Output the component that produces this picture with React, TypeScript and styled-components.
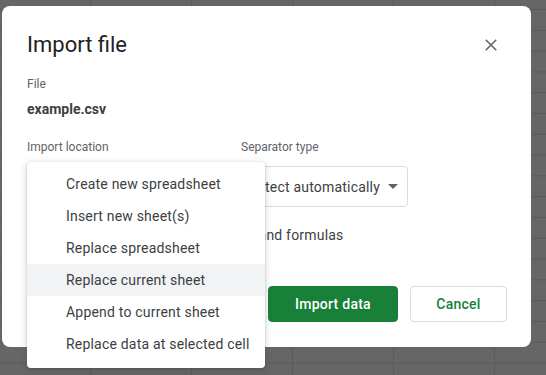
import React, { useState } from "react"
import styled, { createGlobalStyle } from "styled-components"

const GlobalStyle = createGlobalStyle`
  html, body {
    margin: 0;
    padding: 0;
  }
  body {
    width: 546px;
    height: 375px;
    overflow: hidden;
    font-family: Roboto, "Liberation Sans", Arial, sans-serif;
    background-color: #666666;
    background-image:
      linear-gradient(to right, #5a5a5a 1px, transparent 1px),
      linear-gradient(to bottom, #5a5a5a 1px, transparent 1px);
    background-size: 101px 20.8px;
    background-position: 90px 9px;
  }
`

const menuItems = [
  "Create new spreadsheet",
  "Insert new sheet(s)",
  "Replace spreadsheet",
  "Replace current sheet",
  "Append to current sheet",
  "Replace data at selected cell",
]

const App = function () {
  let [hovered, setHovered] = useState(3)

  return (
    <>
      <GlobalStyle />
      <Dialog>
        <Header>
          <Title>Import file</Title>
          <CloseButton aria-label='Close'>
            <svg width='18' height='18' viewBox='0 0 24 24'>
              <path
                d='M5 5 L19 19 M19 5 L5 19'
                stroke='#5f6368'
                strokeWidth='2'
                fill='none'
              />
            </svg>
          </CloseButton>
        </Header>

        <Label>File</Label>
        <FileName>example.csv</FileName>

        <Columns>
          <Field>
            <Label>Import location</Label>
            <Select $width={201}>
              <span>Replace current sheet</span>
              <Caret />
            </Select>
          </Field>
          <Field>
            <Label>Separator type</Label>
            <Select $width={167}>
              <span>Detect automatically</span>
              <Caret />
            </Select>
          </Field>
        </Columns>

        <CheckRow>
          <Box />
          <span>Convert text to numbers, dates, and formulas</span>
        </CheckRow>

        <Actions>
          <Button $primary>Import data</Button>
          <Button>Cancel</Button>
        </Actions>

        <Menu>
          {menuItems.map((item, i) => (
            <MenuItem
              key={item}
              $active={hovered == i}
              onMouseEnter={() => setHovered(i)}
            >
              {item}
            </MenuItem>
          ))}
        </Menu>
      </Dialog>
    </>
  )
}

const Dialog = styled.div`
  position: absolute;
  left: 2px;
  top: 6px;
  width: 529px;
  height: 341px;
  box-sizing: border-box;
  padding: 25px 24px 25px 25px;
  background: #fff;
  border-radius: 8px;
  display: flex;
  flex-direction: column;
  color: #3c4043;
`

const Header = styled.div`
  display: flex;
  align-items: center;
  justify-content: space-between;
  height: 28px;
`

const Title = styled.h1`
  margin: 0;
  font-family: Roboto, "Liberation Sans", sans-serif;
  font-size: 22px;
  font-weight: 400;
  line-height: 28px;
  color: #202124;
`

const CloseButton = styled.button`
  display: flex;
  align-items: center;
  justify-content: center;
  width: 24px;
  height: 24px;
  padding: 0;
  margin-right: 4px;
  border: none;
  background: none;
`

const Label = styled.div`
  font-size: 12px;
  line-height: 16px;
  color: #5f6368;
  margin-top: 17px;
`

const FileName = styled.div`
  font-size: 14px;
  font-weight: 700;
  line-height: 20px;
  color: #3c4043;
  margin-top: 7px;
`

const Columns = styled.div`
  display: grid;
  grid-template-columns: 214px 1fr;
  margin-top: 20px;
  ${Label} {
    margin-top: 0;
  }
`

const Field = styled.div`
  display: flex;
  flex-direction: column;
  gap: 11px;
`

const Select = styled.div<{ $width: number }>`
  width: ${p => p.$width}px;
  height: 41px;
  box-sizing: border-box;
  border: 1px solid #dadce0;
  border-radius: 4px;
  display: flex;
  align-items: center;
  justify-content: space-between;
  gap: 8px;
  padding: 0 14px 0 6px;
  font-size: 14px;
  letter-spacing: 0.2px;
  color: #3c4043;
  white-space: nowrap;
  overflow: hidden;
`

const Caret = styled.span`
  flex: none;
  width: 0;
  height: 0;
  border-left: 5px solid transparent;
  border-right: 5px solid transparent;
  border-top: 5px solid #5f6368;
`

const CheckRow = styled.div`
  display: flex;
  align-items: center;
  gap: 10px;
  margin-top: 18px;
  font-size: 14px;
  letter-spacing: 0.2px;
  line-height: 20px;
  color: #3c4043;
  white-space: nowrap;
`

const Box = styled.span`
  width: 14px;
  height: 14px;
  margin: 0 2px;
  border: 2px solid #5f6368;
  border-radius: 2px;
  box-sizing: border-box;
`

const Actions = styled.div`
  margin-top: auto;
  display: flex;
  justify-content: flex-end;
  gap: 12px;
`

const Button = styled.button<{ $primary?: boolean }>`
  height: 36px;
  box-sizing: border-box;
  padding: 0 24px;
  min-width: ${p => (p.$primary ? 130 : 97)}px;
  border-radius: 4px;
  font-family: Roboto, "Liberation Sans", sans-serif;
  font-size: 14px;
  font-weight: 500;
  letter-spacing: 0.25px;
  border: 1px solid ${p => (p.$primary ? "#188038" : "#dadce0")};
  background: ${p => (p.$primary ? "#188038" : "#fff")};
  color: ${p => (p.$primary ? "#fff" : "#188038")};
`

const Menu = styled.ul`
  position: absolute;
  left: 25px;
  top: 156px;
  width: 238px;
  margin: 0;
  padding: 6px 0 8px;
  list-style: none;
  background: #fff;
  border-radius: 4px;
  box-shadow: 0 2px 6px 2px rgba(60, 64, 67, 0.15),
    0 1px 2px 0 rgba(60, 64, 67, 0.3);
`

const MenuItem = styled.li<{ $active?: boolean }>`
  height: 32px;
  display: flex;
  align-items: center;
  padding-left: 39px;
  font-size: 14px;
  letter-spacing: 0.2px;
  color: #3c4043;
  background: ${p => (p.$active ? "#f1f3f4" : "transparent")};
  cursor: default;
`

export default App
